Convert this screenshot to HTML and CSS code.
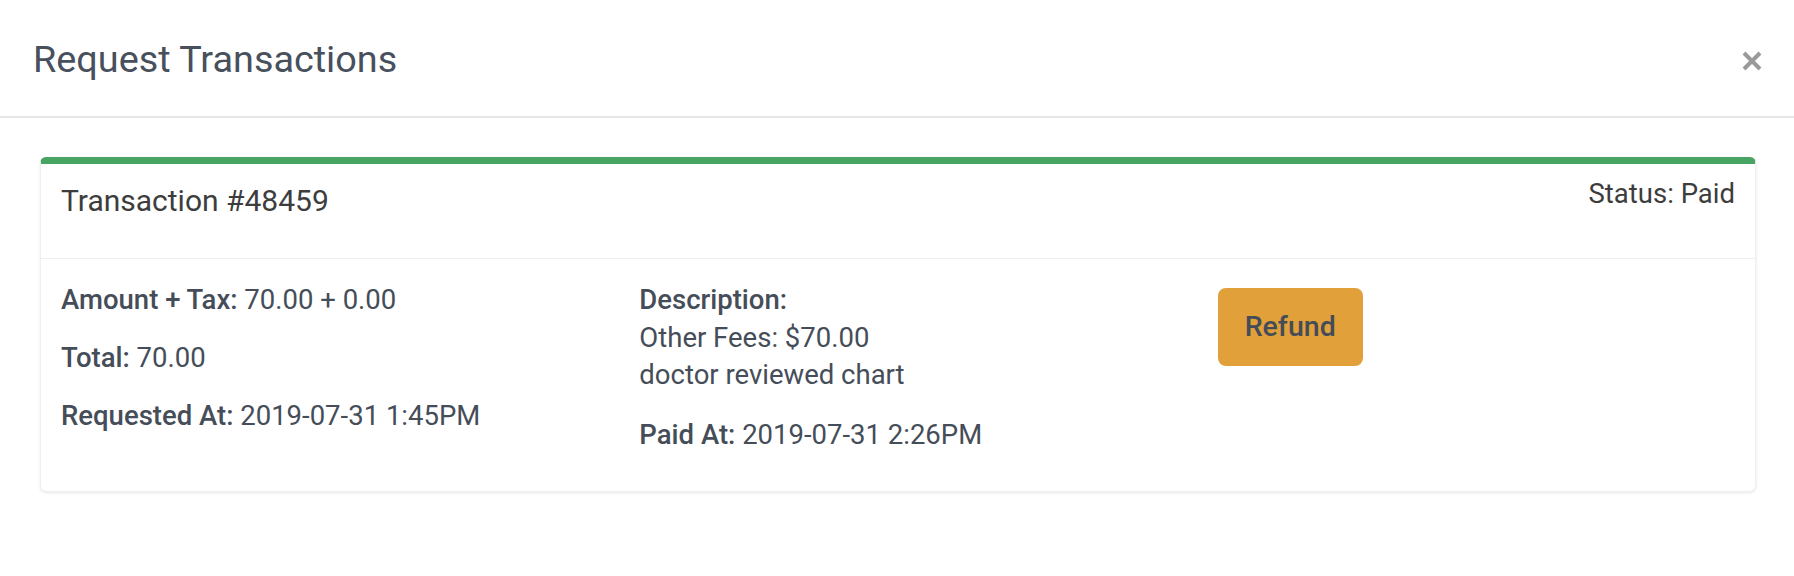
FILE: index.html
```html
<!DOCTYPE html>
<html lang="en">
<head>
<meta charset="utf-8">
<title>Request Transactions</title>
<link rel="stylesheet" href="styles.css">
</head>
<body>
<div class="modal">
  <div class="modal-header">
    <h4 class="modal-title">Request Transactions</h4>
    <button class="close" type="button" aria-label="Close">
      <svg width="20" height="20" viewBox="0 0 20 20"><path d="M2 2 L18 18 M18 2 L2 18" stroke="#9a9a9a" stroke-width="4" fill="none"/></svg>
    </button>
  </div>
  <div class="modal-body">
    <div class="card">
      <div class="card-header">
        <h5 class="card-title">Transaction #48459</h5>
        <div class="status">Status: Paid</div>
      </div>
      <div class="card-body">
        <div class="col">
          <p><span class="label">Amount + Tax:</span> 70.00 + 0.00</p>
          <p><span class="label">Total:</span> 70.00</p>
          <p><span class="label">Requested At:</span> 2019-07-31 1:45PM</p>
        </div>
        <div class="col">
          <div class="desc">
            <div class="label">Description:</div>
            <div>Other Fees: $70.00</div>
            <div>doctor reviewed chart</div>
          </div>
          <p><span class="label">Paid At:</span> 2019-07-31 2:26PM</p>
        </div>
        <div class="col">
          <button class="btn-refund" type="button">Refund</button>
        </div>
      </div>
    </div>
  </div>
</div>
</body>
</html>
```
FILE: styles.css
```css
* { box-sizing: border-box; }
html, body {
  margin: 0;
  padding: 0;
  background: #ffffff;
}
body {
  font-family: Roboto, "Liberation Sans", Arial, sans-serif;
  color: #454d59;
  font-size: 27.5px;
  line-height: 37.5px;
}
.modal {
  width: 1794px;
}
.modal-header {
  display: flex;
  justify-content: space-between;
  align-items: flex-start;
  padding: 37px 32px 35px 33px;
  border-bottom: 2px solid #e6e6e6;
}
.modal-title {
  margin: 0;
  font-size: 37.8px;
  line-height: 44.4px;
  font-weight: 400;
  color: #47505c;
}
.close {
  margin-top: 14px;
  padding: 0;
  border: none;
  background: none;
  width: 20px;
  height: 20px;
  display: block;
}
.close svg { display: block; }
.modal-body {
  padding: 39px 38px 40px 40px;
}
.card {
  border: 1px solid #efefef;
  border-top: 7px solid #47a463;
  border-radius: 6px;
  background: #fff;
  box-shadow: 0 1px 3px rgba(0, 0, 0, 0.09);
}
.card-header {
  display: flex;
  justify-content: space-between;
  align-items: flex-start;
  padding: 11px 20px 11px 20px;
  border-bottom: 1px solid #efefef;
  color: #3d3d3d;
}
.card-title {
  margin: 8px 0 28px;
  font-size: 30px;
  line-height: 36px;
  font-weight: 400;
}
.status {
  font-size: 27.5px;
  line-height: 37.5px;
}
.card-body {
  display: grid;
  grid-template-columns: repeat(3, 1fr);
  column-gap: 61px;
  padding: 22px 20px 17px 20px;
}
.col p {
  margin: 0 0 20.5px;
}
.desc {
  margin-bottom: 22px;
}
.label {
  font-weight: 500;
}
.btn-refund {
  margin-top: 7px;
  border: none;
  border-radius: 8px;
  background: #e1a03a;
  color: #444c58;
  font-family: Roboto, "Liberation Sans", Arial, sans-serif;
  font-size: 28.5px;
  line-height: 37.5px;
  font-weight: 500;
  padding: 20px 27px;
  cursor: pointer;
}
```
